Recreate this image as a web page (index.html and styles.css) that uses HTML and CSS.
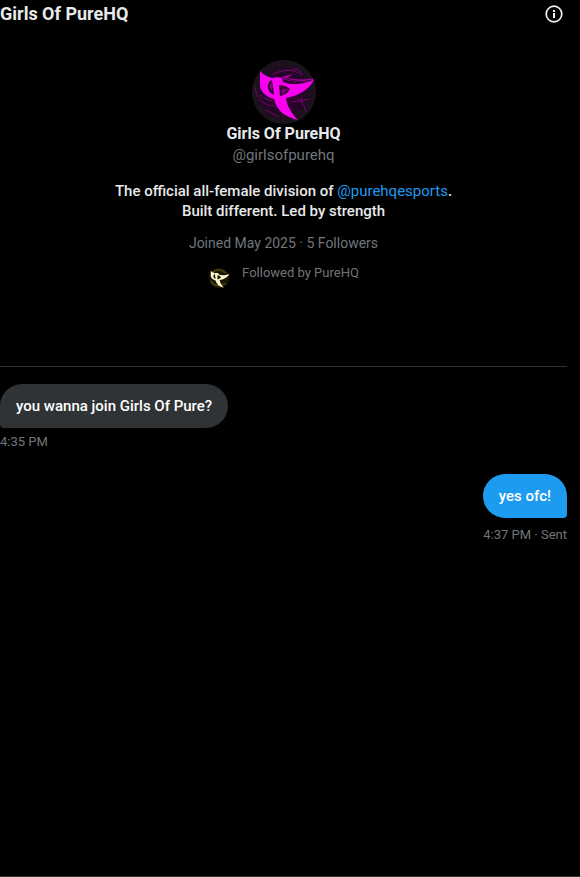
FILE: index.html
```
<!DOCTYPE html>
<html lang="en">
<head>
    <meta charset="UTF-8">
    <meta name="viewport" content="width=device-width, initial-scale=1.0">
    <title>Girls Of PureHQ</title>
    <link rel="stylesheet" href="styles.css">
</head>
<body>
    <header class="topbar">
        <h1>Girls Of PureHQ</h1>
        <button class="info-button" type="button" aria-label="Conversation info">
            <svg viewBox="0 0 20 20" width="20" height="20">
                <circle cx="10" cy="10" r="7.8" fill="none" stroke="currentColor" stroke-width="1.7"/>
                <path d="M9 6h2v2H9zM9 9h2v5H9z" fill="currentColor"/>
            </svg>
        </button>
    </header>
    <main class="conversation">
        <section class="profile">
            <svg class="avatar" viewBox="0 0 64 64">
                <defs>
                    <clipPath id="round"><circle cx="32" cy="32" r="32"/></clipPath>
                    <radialGradient id="glow">
                        <stop offset="0" stop-color="#42003f"/>
                        <stop offset="0.6" stop-color="#260428"/>
                        <stop offset="1" stop-color="#19151a"/>
                    </radialGradient>
                    <path id="mark" fill-rule="evenodd" d="M8 11C12 15 16 17 20 18C24 17 27 17 30 18L31 22C41 26 51 24 62 20C57 29 49 35 34 38C35 46 40 54 46 60C34 57 26 52 23 42L22 39C14 37 9 32 8 26ZM20 20C14 23 14 31 22 35ZM27 25L28 36C33 35 37 32 38 29C34 26 31 25 27 25Z"/>
                </defs>
                <g clip-path="url(#round)">
                    <rect width="64" height="64" fill="url(#glow)"/>
                    <g fill="none" stroke="#75066f" stroke-width="1">
                        <path d="M21 14C32 9 43 9 49 15M39 11C43 7 48 9 50 15"/>
                        <path d="M3 27C5 40 12 45 22 46M8 35C13 40 16 40 21 41M40 42L57 39M45 38C51 44 53 46 54 52M49 37L51 43M14 50L27 57"/>
                    </g>
                    <path d="M30 17L41 14L35 18C44 20 53 20 62 18L61 21C49 23 39 22 31 19Z" fill="#b800b1"/>
                    <path d="M32 18C42 22 52 22 60 20" fill="none" stroke="#26042a" stroke-width="1"/>
                    <use href="#mark" fill="#f900ef"/>
                    <path d="M30 29L36 29L30 34ZM17 25L20 23L20 32Z" fill="#860081"/>
                </g>
            </svg>
            <h2>Girls Of PureHQ</h2>
            <p class="handle">@girlsofpurehq</p>
            <p class="bio">The official all-female division of <a href="#">@purehqesports</a>.<br>Built different. Led by strength</p>
            <p class="stats">Joined May 2025 · 5 Followers</p>
            <div class="followed">
                <svg class="mini-avatar" viewBox="0 0 64 64">
                    <circle cx="32" cy="32" r="30" fill="#171402"/>
                    <path d="M9 39C13 54 32 60 51 47M14 15C27 6 42 7 52 18" fill="none" stroke="#4a3f0f" stroke-width="5"/>
                    <use href="#mark" fill="#fff8cf"/>
                </svg>
                <span>Followed by PureHQ</span>
            </div>
        </section>
        <section class="messages">
            <div class="message received">
                <p class="bubble">you wanna join Girls Of Pure?</p>
                <time>4:35 PM</time>
            </div>
            <div class="message sent">
                <p class="bubble">yes ofc!</p>
                <span class="status"><time>4:37 PM</time> · Sent</span>
            </div>
        </section>
    </main>
</body>
</html>
```
FILE: styles.css
```
* {
    box-sizing: border-box;
}
body {
    margin: 0;
    min-height: 100vh;
    background-color: #000;
    border-bottom: 1px solid #2f3336;
    color: #e7e9ea;
    font-family: Roboto, "Liberation Sans", sans-serif;
    font-size: 15px;
    line-height: 20px;
}
h1, h2, p {
    margin: 0;
}
a {
    color: #1d9bf0;
    font-weight: 400;
    text-decoration: none;
}
.topbar {
    display: flex;
    align-items: center;
    justify-content: space-between;
    height: 28px;
    padding-right: 16px;
}
.topbar h1 {
    font-size: 18px;
    font-weight: 700;
}
.info-button {
    display: flex;
    padding: 0;
    border: 0;
    background: none;
    color: #eff3f4;
    cursor: pointer;
}
.conversation {
    margin-right: 13px;
}
.profile {
    display: flex;
    flex-direction: column;
    align-items: center;
    padding: 32px 0 77px;
    border-bottom: 1px solid #2f3336;
    color: #71767b;
    text-align: center;
}
.avatar {
    width: 64px;
    height: 64px;
}
.profile h2 {
    color: #e7e9ea;
    font-size: 16px;
    font-weight: 700;
}
.handle {
    margin: 1px 0 16px;
}
.bio {
    margin-bottom: 12px;
    color: #e7e9ea;
    font-weight: 500;
}
.stats {
    font-size: 14px;
}
.followed {
    display: flex;
    gap: 12px;
    margin-top: 10px;
    font-size: 13px;
}
.mini-avatar {
    width: 22px;
    height: 22px;
    margin-top: 4px;
}
.messages {
    display: flex;
    flex-direction: column;
    gap: 22px;
    padding-top: 17px;
}
.message {
    display: flex;
    flex-direction: column;
    align-items: flex-start;
    gap: 4px;
    color: #71767b;
    font-size: 13px;
}
.bubble {
    padding: 12px 16px;
    border-radius: 22px 22px 22px 4px;
    background-color: #2f3336;
    color: #fff;
    font-size: 15px;
    font-weight: 500;
}
.sent {
    align-items: flex-end;
    gap: 7px;
}
.sent .bubble {
    border-radius: 22px 22px 4px 22px;
    background-color: #1d9bf0;
}
```
